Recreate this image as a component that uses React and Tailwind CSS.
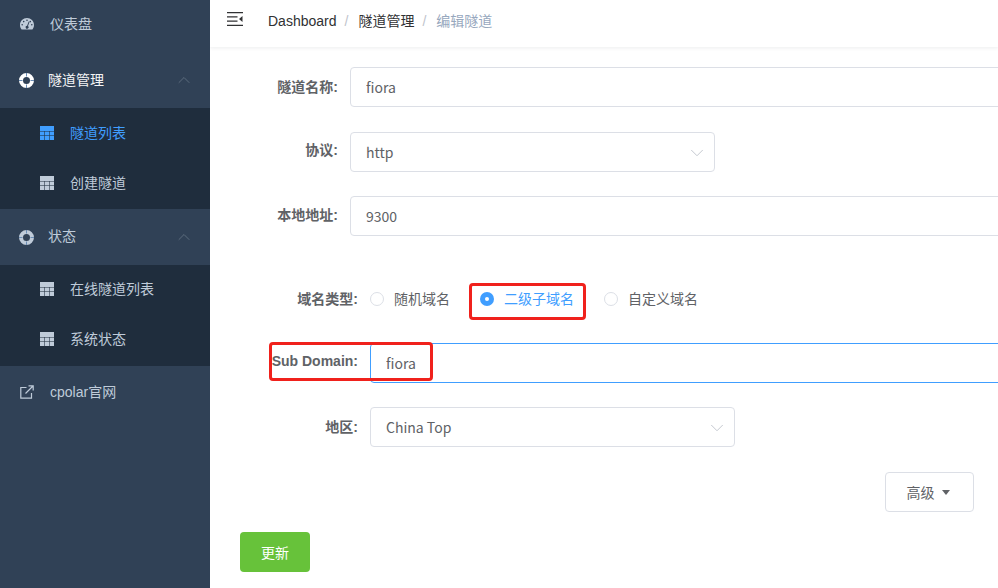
import React from 'react';
import { ChevronUp, ChevronDown } from 'lucide-react';

const GaugeIcon = ({ className }) => (
  <svg viewBox="0 0 14 12" className={className} fill="currentColor">
    <path fillRule="evenodd" d="M7 0C3.100 0 0 3 0 6.900c0 1.600.5 3 1.400 4.300.2.300.4.400.7.400h9.800c.3 0 .5-.1.7-.4.9-1.300 1.400-2.700 1.400-4.300C14 3 10.900 0 7 0zM7 1.400a.8.8 0 1 1 0 1.600.8.8 0 0 1 0-1.600zM3.700 2.800a.8.8 0 1 1 0 1.600.8.8 0 0 1 0-1.600zM10.300 2.800a.8.8 0 1 1 0 1.600.8.8 0 0 1 0-1.600zM2.200 6a.8.8 0 1 1 0 1.600.8.8 0 0 1 0-1.600zM11.800 6a.8.8 0 1 1 0 1.600.8.800 0 0 1 0-1.600zM8.700 3.600l.8.300-1.500 4.100a1.500 1.500 0 1 1-.9-.3z" />
  </svg>
);

const BuoyIcon = ({ className }) => (
  <svg viewBox="0 0 15 15" className={className} fill="none">
    <circle cx="7.500" cy="7.500" r="5.500" stroke="currentColor" strokeWidth="4" />
    <path d="M7.500 0v3.500M7.500 11.500V15M0 7.500h3.500M11.500 7.500H15" stroke="#6b8db5" strokeWidth="1" />
  </svg>
);

const tableCells = [
  [0, 5.500, 4.300],
  [4.800, 5.500, 4.400],
  [9.700, 5.500, 4.300],
  [0, 9.900, 4.300],
  [4.800, 9.900, 4.400],
  [9.700, 9.900, 4.300],
];

const TableIcon = ({ className }) => (
  <svg viewBox="0 0 14 14" className={className} fill="currentColor">
    <rect width="14" height="5" />
    {tableCells.map(([x, y, w]) => (
      <rect key={`${x}-${y}`} x={x} y={y} width={w} height={y > 9 ? 4.100 : 3.900} />
    ))}
  </svg>
);

const LinkIcon = ({ className }) => (
  <svg viewBox="0 0 14 14" className={className} fill="none" stroke="currentColor" strokeWidth="1.200">
    <path d="M6.500 2.500H.8v10.700h10.700V8" />
    <path d="M5.500 8.500 13 1M8.500.8h4.700v4.700" />
  </svg>
);

const MenuFoldIcon = ({ className }) => (
  <svg viewBox="0 0 16 14" className={className} fill="currentColor">
    <path d="M0 0h16v1.300H0zM0 4.200h10.500v1.300H0zM0 8.500h10.500v1.300H0zM0 12.700h16V14H0zM15.500 4v6L12 7z" />
  </svg>
);

const SubItem = ({ label, active }) => (
  <div className="flex h-[50px] items-center pl-10">
    <TableIcon className={`h-[14px] w-[14px] ${active ? 'text-[#409eff]' : 'text-[#bfcbd9]'}`} />
    <span className={`ml-4 text-sm ${active ? 'text-[#409eff]' : 'text-[#bfcbd9]'}`}>{label}</span>
  </div>
);

const Group = ({ label, active, shift, children }) => (
  <div>
    <div className="flex h-[56px] items-center pl-[19px] pr-4">
      <BuoyIcon className={`h-[15px] w-[15px] ${active ? 'text-white' : 'text-[#bfcbd9]'}`} />
      <span className={`ml-[14px] text-sm ${shift} ${active ? 'text-[#f4f4f5]' : 'text-[#bfcbd9]'}`}>{label}</span>
      <ChevronUp className="ml-auto h-5 w-5 text-[#5f6e80]" strokeWidth={1.100} />
    </div>
    <div className="bg-[#1f2d3d] pb-px">
      <div className={shift}>{children}</div>
    </div>
  </div>
);

function Sidebar() {
  return (
    <aside className="h-[588px] w-[210px] shrink-0 overflow-hidden bg-[#304156]">
      <div className="flex h-[52px] items-center pb-1 pl-5">
        <GaugeIcon className="h-[12px] w-[14px] text-[#bfcbd9]" />
        <span className="ml-4 text-sm text-[#bfcbd9]">仪表盘</span>
      </div>
      <Group label="隧道管理" active>
        <SubItem label="隧道列表" active />
        <SubItem label="创建隧道" />
      </Group>
      <Group label="状态" shift="-translate-y-px">
        <SubItem label="在线隧道列表" />
        <SubItem label="系统状态" />
      </Group>
      <div className="flex h-[55px] items-center pb-1 pl-5">
        <LinkIcon className="h-[14px] w-[14px] text-[#bfcbd9]" />
        <span className="ml-4 text-sm text-[#bfcbd9]">cpolar官网</span>
      </div>
    </aside>
  );
}

const Breadcrumb = () => (
  <header className="flex h-[47px] items-center bg-white pb-[5px] shadow-[0_1px_4px_rgba(0,21,41,0.08)]">
    <MenuFoldIcon className="ml-[17px] h-[14px] w-4 -translate-y-[2px] text-[#303133]" />
    <nav className="ml-[25px] flex items-center text-sm">
      <span className="text-[#303133]">Dashboard</span>
      <span className="ml-2 mr-[10px] text-[#c0c4cc]">/</span>
      <span className="text-[#303133]">隧道管理</span>
      <span className="ml-2 mr-[10px] text-[#c0c4cc]">/</span>
      <span className="text-[#97a8be]">编辑隧道</span>
    </nav>
  </header>
);

const Row = ({ label, width, labelClass = '', className, children }) => (
  <div className={`flex items-center ${className}`}>
    <label className={`shrink-0 pr-3 text-right text-sm font-bold text-[#606266] ${width} ${labelClass}`}>{label}</label>
    {children}
  </div>
);

const valueFont = { fontFamily: '"Noto Sans CJK SC", sans-serif' };

const TextInput = ({ value, focused }) => (
  <input
    readOnly
    value={value}
    style={valueFont}
    className={`h-10 w-[800px] shrink-0 rounded border bg-white px-[15px] text-sm text-[#606266] outline-none ${focused ? 'border-[#409eff]' : 'border-[#dcdfe6]'}`}
  />
);

const SelectBox = ({ value, width }) => (
  <div style={valueFont} className={`flex h-10 items-center justify-between rounded border border-[#dcdfe6] bg-white pl-[15px] pr-[6px] text-sm text-[#606266] ${width}`}>
    <span>{value}</span>
    <ChevronDown className="h-[22px] w-[22px] translate-y-px text-[#c0c4cc]" strokeWidth={1} />
  </div>
);

const Radio = ({ label, checked }) => (
  <div className="flex items-center">
    {checked ? (
      <span className="flex h-[14px] w-[14px] items-center justify-center rounded-full bg-[#409eff]">
        <span className="h-1 w-1 rounded-full bg-white" />
      </span>
    ) : (
      <span className="h-[14px] w-[14px] rounded-full border border-[#dcdfe6] bg-white" />
    )}
    <span className={`ml-[10px] text-sm ${checked ? 'text-[#409eff]' : 'text-[#606266]'}`}>{label}</span>
  </div>
);

export default function App() {
  return (
    <div
      className="relative flex h-[588px] w-[998px] overflow-hidden bg-white"
      style={{ fontFamily: '"Liberation Sans", "Noto Sans CJK SC", sans-serif' }}
    >
      <Sidebar />
      <main className="min-w-0 flex-1 overflow-hidden">
        <Breadcrumb />
        <form className="pl-[30px] pt-5">
          <Row label="隧道名称:" width="w-[110px]" className="mb-[25px]">
            <TextInput value="fiora" />
          </Row>
          <Row label="协议:" width="w-[110px]" labelClass="-translate-y-[2px]" className="mb-6">
            <SelectBox value="http" width="w-[365px]" />
          </Row>
          <Row label="本地地址:" width="w-[110px]" labelClass="-translate-y-px" className="mb-[43px]">
            <TextInput value="9300" />
          </Row>
          <Row label="域名类型:" width="w-[130px]" className="mb-6 h-10">
            <div className="flex gap-[30px]">
              <Radio label="随机域名" />
              <Radio label="二级子域名" checked />
              <Radio label="自定义域名" />
            </div>
          </Row>
          <Row label="Sub Domain:" width="w-[130px]" labelClass="-translate-y-[2px]" className="mb-6">
            <TextInput value="fiora" focused />
          </Row>
          <Row label="地区:" width="w-[130px]" className="mb-[25px]">
            <SelectBox value="China Top" width="w-[365px]" />
          </Row>
          <div className="mb-5 flex justify-end pr-6">
            <button type="button" className="flex h-10 w-[89px] items-center justify-center rounded border border-[#dcdfe6] bg-white pr-[3px] pt-px text-sm text-[#606266]">
              高级
              <span className="ml-[7px] h-0 w-0 border-x-[4.500px] border-t-[5px] border-x-transparent border-t-[#606266]" />
            </button>
          </div>
          <button type="button" className="h-10 w-[70px] rounded bg-[#67c23a] pt-px text-sm text-white">更新</button>
        </form>
      </main>
      {/* red annotation boxes drawn over the screenshot */}
      <div className="absolute left-[469px] top-[283px] h-[37px] w-[117px] rounded-[4px] border-[3px] border-[#f0211c]" />
      <div className="absolute left-[269px] top-[342px] h-[39px] w-[164px] rounded-[4px] border-[3px] border-[#f0211c]" />
    </div>
  );
}
